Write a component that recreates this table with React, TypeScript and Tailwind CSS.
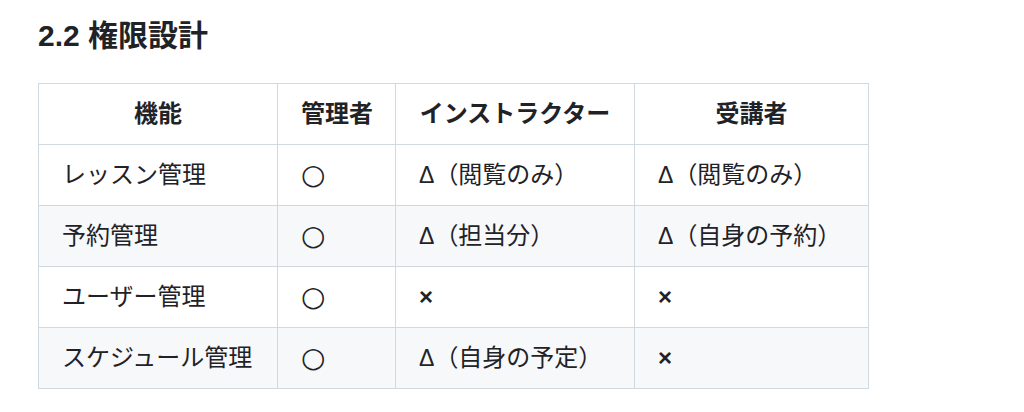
import React from "react";

const headers = ["機能", "管理者", "インストラクター", "受講者"];

const rows: string[][] = [
  ["レッスン管理", "○", "Δ（閲覧のみ）", "Δ（閲覧のみ）"],
  ["予約管理", "○", "Δ（担当分）", "Δ（自身の予約）"],
  ["ユーザー管理", "○", "×", "×"],
  ["スケジュール管理", "○", "Δ（自身の予定）", "×"],
];

const widths = ["w-[239px]", "w-[118px]", "w-[239px]", "w-[234px]"];

const Cell = ({ text }: { text: string }) => {
  if (text === "○") {
    return <span className="font-['DejaVu_Sans'] text-[28px] font-bold leading-[36px]">○</span>;
  }
  if (text === "×") {
    return <span className="font-bold">×</span>;
  }
  if (text.startsWith("Δ")) {
    return (
      <>
        <span className="text-[23px] font-['Liberation_Sans']">Δ</span>
        {text.slice(1)}
      </>
    );
  }
  return <>{text}</>;
};

export default function App() {
  return (
    <div className="min-h-[412px] w-[1024px] bg-white pl-[38px] pt-[17px] text-[#1f2328] font-['Liberation_Sans','Noto_Sans_CJK_JP',sans-serif]">
      <h3 className="text-[30px] font-bold leading-[38px]">2.2 権限設計</h3>
      <table className="mt-[28px] w-[831px] table-fixed border-collapse text-[24px] leading-[36px]">
        <thead>
          <tr className="bg-white">
            {headers.map((h, i) => (
              <th
                key={h}
                className={`${widths[i]} h-[61px] whitespace-nowrap border border-[#d1d9e0] px-[23px] py-0 text-center font-semibold`}
              >
                {h}
              </th>
            ))}
          </tr>
        </thead>
        <tbody>
          {rows.map((row, r) => (
            <tr key={r} className={r % 2 === 1 ? "bg-[#f6f8fa]" : "bg-white"}>
              {row.map((c, i) => (
                <td
                  key={i}
                  className={`h-[61px] whitespace-nowrap border border-[#d1d9e0] px-[23px] py-0 text-left`}
                >
                  <Cell text={c} />
                </td>
              ))}
            </tr>
          ))}
        </tbody>
      </table>
    </div>
  );
}
